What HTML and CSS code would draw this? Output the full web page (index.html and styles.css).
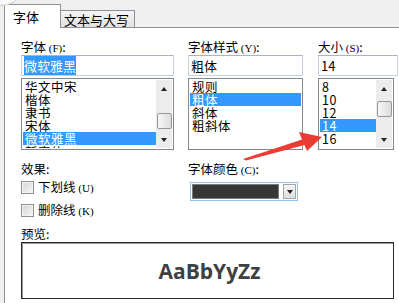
FILE: index.html
```html
<!DOCTYPE html>
<html lang="zh-CN">
<head>
<meta charset="utf-8">
<title>字体</title>
<link rel="stylesheet" href="styles.css">
</head>
<body>
<div class="dialog">
  <div class="corner"></div>
  <div class="tabs">
    <div class="tab active">字体</div>
    <div class="tab">文本与大写</div>
  </div>
  <div class="panel">
    <div class="row-top">
      <div class="field c1">
        <div class="label">字体 <span class="k">(F)</span>:</div>
        <div class="input"><span class="sel">微软雅黑</span></div>
        <div class="list">
          <div class="items">
            <div class="item">华文中宋</div>
            <div class="item">楷体</div>
            <div class="item">隶书</div>
            <div class="item">宋体</div>
            <div class="item on">微软雅黑</div>
            <div class="item">新宋体</div>
          </div>
          <div class="sb">
            <div class="btn"><span class="up"></span></div>
            <div class="track"><div class="thumb t1"></div></div>
            <div class="btn"><span class="down"></span></div>
          </div>
        </div>
      </div>
      <div class="field c2">
        <div class="label">字体样式 <span class="k">(Y)</span>:</div>
        <div class="input">粗体</div>
        <div class="list">
          <div class="items">
            <div class="item">规则</div>
            <div class="item on">粗体</div>
            <div class="item">斜体</div>
            <div class="item">粗斜体</div>
          </div>
        </div>
      </div>
      <div class="field c3">
        <div class="label">大小 <span class="k">(S)</span>:</div>
        <div class="input">14</div>
        <div class="list">
          <div class="items">
            <div class="item">8</div>
            <div class="item">10</div>
            <div class="item">12</div>
            <div class="item on">14</div>
            <div class="item">16</div>
          </div>
          <div class="sb">
            <div class="btn"><span class="up"></span></div>
            <div class="track"><div class="thumb t3"></div></div>
            <div class="btn"><span class="down"></span></div>
          </div>
        </div>
      </div>
    </div>
    <div class="row-mid">
      <div class="effects">
        <div class="label">效果:</div>
        <div class="check first"><span class="box"></span><span>下划线 <span class="k">(U)</span></span></div>
        <div class="check"><span class="box"></span><span>删除线 <span class="k">(K)</span></span></div>
      </div>
      <div class="color">
        <div class="label">字体颜色 <span class="k">(C)</span>:</div>
        <div class="combo">
          <span class="swatch"></span>
          <span class="drop"><span class="down"></span></span>
        </div>
      </div>
    </div>
    <div class="label preview-label">预览:</div>
    <div class="preview">AaBbYyZz</div>
  </div>
  <svg class="arrow" width="399" height="303" viewBox="0 0 399 303">
    <polygon points="243,159 302,139.5 299,132 322,137 307,151 304.5,145 246,160.5" fill="#ec3b33"/>
  </svg>
</div>
</body>
</html>
```

FILE: styles.css
```css
html, body {
  margin: 0;
  padding: 0;
}
body {
  width: 399px;
  height: 303px;
  overflow: hidden;
  background: #f0f0f0;
  font-family: "Noto Sans CJK SC", "Liberation Sans", sans-serif;
  font-size: 12.5px;
  color: #000;
}
.dialog {
  position: relative;
  width: 399px;
  height: 303px;
  display: flex;
  flex-direction: column;
}
.corner {
  position: absolute;
  left: -24px;
  top: -44px;
  width: 48px;
  height: 48px;
  border-radius: 50%;
  border: 1px solid #c9c9c9;
  background: #fafafa;
  z-index: 3;
}
.tabs {
  height: 27px;
  display: flex;
  align-items: flex-end;
  padding-left: 4px;
  box-sizing: border-box;
}
.tab {
  box-sizing: border-box;
  font-size: 13px;
  line-height: 15px;
  border: 1px solid #8d9096;
  border-bottom: none;
}
.tab.active {
  width: 57px;
  height: 24px;
  margin-bottom: -1px;
  padding: 4px 0 0 8px;
  background: #fff;
  position: relative;
  z-index: 2;
}
.tab:not(.active) {
  width: 74px;
  height: 17px;
  border-left: none;
  padding: 1px 0 0 3px;
  background: linear-gradient(#f4f4f4, #e2e2e2);
}
.panel {
  flex: 1;
  margin-left: 4px;
  background: #fff;
  border-top: 1px solid #8d9096;
  border-left: 1px solid #8d9096;
  padding: 12px 0 0 16px;
}
.label {
  height: 14px;
  line-height: 14px;
  font-size: 12.5px;
  white-space: nowrap;
}
.k {
  font-family: "Liberation Serif", serif;
  font-size: 11px;
}
.row-top {
  display: flex;
}
.field {
  display: flex;
  flex-direction: column;
}
.c1 { width: 153px; }
.c2 { width: 115px; margin-left: 14px; }
.c3 { width: 80px; margin-left: 15px; }
.c3 .list { width: 76px; }
.input {
  margin-top: 1px;
  height: 21px;
  box-sizing: border-box;
  border: 1px solid #c6d2de;
  border-top-color: #abb4be;
  padding: 2px 0 0 2px;
  font-size: 13px;
  line-height: 15px;
}
.sel {
  background: #3399ff;
  color: #fff;
}
.list {
  margin-top: 2px;
  height: 72px;
  box-sizing: border-box;
  border: 1px solid #828790;
  padding: 1px;
  display: flex;
  overflow: hidden;
}
.items {
  flex: 1;
  overflow: hidden;
}
.item {
  height: 13px;
  line-height: 13px;
  font-size: 12.5px;
  letter-spacing: 0.5px;
  padding-left: 2px;
  white-space: nowrap;
}
.item.on {
  background: #3399ff;
  color: #fff;
}
.sb {
  width: 16px;
  display: flex;
  flex-direction: column;
  background: #ececec;
}
.btn {
  height: 17px;
  display: flex;
  align-items: center;
  justify-content: center;
}
.up, .down {
  width: 0;
  height: 0;
  border-left: 3.5px solid transparent;
  border-right: 3.5px solid transparent;
}
.up { border-bottom: 4px solid #222; }
.down { border-top: 4px solid #222; }
.track {
  flex: 1;
  display: flex;
  flex-direction: column;
  align-items: center;
}
.thumb {
  width: 15px;
  height: 16px;
  box-sizing: border-box;
  border: 1px solid #989898;
  border-radius: 2px;
  background: linear-gradient(90deg, #f7f7f7, #dcdcdc);
}
.thumb.t1 { margin-top: 16px; }
.thumb.t3 { margin-top: 4px; }
.row-mid {
  display: flex;
  margin-top: 12px;
}
.effects {
  width: 167px;
}
.check {
  display: flex;
  align-items: center;
  height: 13px;
  margin-top: 10px;
  line-height: 13px;
  white-space: nowrap;
}
.check.first { margin-top: 5px; }
.box {
  width: 13px;
  height: 13px;
  box-sizing: border-box;
  border: 1px solid #8f8f8f;
  background: linear-gradient(135deg, #d4d4d4, #f6f6f6);
  box-shadow: inset 0 0 0 1px #f4f4f4;
  margin-right: 4px;
}
.combo {
  margin: 6px 0 0 2px;
  width: 108px;
  height: 19px;
  box-sizing: border-box;
  border: 1px solid #8fc2ef;
  display: flex;
  padding: 1px;
}
.swatch {
  width: 87px;
  box-sizing: border-box;
  border: 1px solid #7a7a7a;
  background: #363636;
}
.drop {
  margin-left: 4px;
  flex: 1;
  box-sizing: border-box;
  border: 1px solid #a6a6a6;
  background: linear-gradient(#f6f6f6, #dedede);
  display: flex;
  align-items: center;
  justify-content: center;
}
.preview-label {
  margin-top: 10px;
}
.preview {
  margin-top: 1px;
  width: 373px;
  height: 57px;
  box-sizing: border-box;
  border: 1px solid #2a2a2a;
  box-shadow: inset 1px 1px 0 #9a9a9a;
  display: flex;
  align-items: center;
  justify-content: center;
  font-family: "Open Sans", sans-serif;
  font-weight: bold;
  font-size: 21px;
  color: #404040;
  padding-left: 4px;
}
.arrow {
  position: absolute;
  left: 0;
  top: 0;
  pointer-events: none;
  z-index: 4;
}
```
